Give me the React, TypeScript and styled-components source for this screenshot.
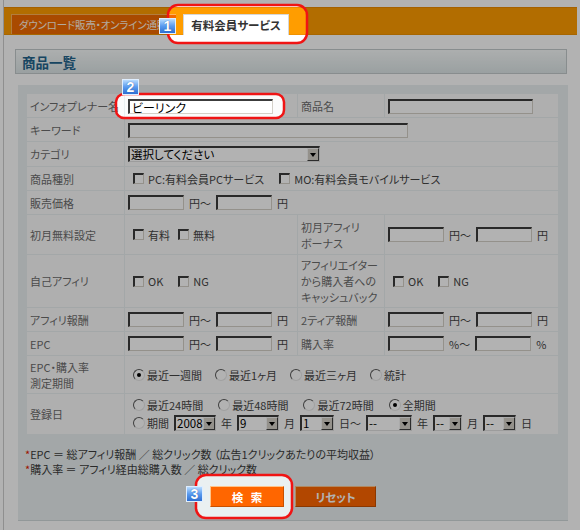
import React from 'react'
import styled, { createGlobalStyle, css } from 'styled-components'

const GlobalStyle = createGlobalStyle`
    html, body {
        margin: 0;
        padding: 0;
        background: #fff;
    }
    body {
        font-family: "Noto Sans CJK JP", "Noto Sans", sans-serif;
        font-size: 11px;
        font-feature-settings: "palt";
        color: #555;
    }
`

const Page = styled.div`
    position: relative;
    width: 580px;
    height: 530px;
    overflow: hidden;
    background: #fff;
`

const Frame = styled.div`
    box-sizing: border-box;
    height: 100%;
    margin-left: 3px;
    padding-top: 7px;
    border-left: 1px solid #cdcdcd;
`

const TabBar = styled.div`
    display: flex;
    box-sizing: border-box;
    width: 573px;
    height: 28px;
    padding-left: 7px;
    gap: 7px;
    align-items: flex-end;
    background: #ff9d00;
    border-top: 1px solid #ec8c00;
    border-bottom: 1px solid #f09200;
`

const Tab = styled.div<{ $active?: boolean }>`
    display: flex;
    box-sizing: border-box;
    height: 20px;
    align-items: center;
    overflow: hidden;
    white-space: nowrap;

    ${p => p.$active ? css`
        width: 106px;
        height: 21px;
        margin-bottom: -1px;
        justify-content: center;
        font-size: 11.5px;
        font-weight: bold;
        color: #333;
        background: #fff;
        border: 1px solid #d6d6d6;
        border-bottom: none;
    ` : css`
        width: 165px;
        padding-left: 7px;
        font-size: 10.5px;
        letter-spacing: -0.2px;
        color: #fff4e4;
        background: #f36a00;
        border-top: 1px solid #ffb45a;
        border-left: 1px solid #ffb45a;
    `}
`

const Content = styled.div`
    padding: 14px 0 0 11px;
`

const PanelHeader = styled.div`
    display: flex;
    box-sizing: border-box;
    width: 552px;
    height: 25px;
    padding-left: 6px;
    align-items: center;
    font-size: 13.5px;
    font-weight: bold;
    color: #23638c;
    background: linear-gradient(#f7fafa, #dde6e7);
    border: 1px solid #c3cbcc;
`

const FormBox = styled.div`
    box-sizing: border-box;
    width: 550px;
    height: 436px;
    margin: 11px 0 0 3px;
    padding: 8px;
    background: #eaf0f1;
    border-bottom: 1px solid #d2dadb;
`

const Grid = styled.table`
    width: 533px;
    table-layout: fixed;
    border-collapse: separate;
    border-spacing: 1px;
`

const Row = styled.tr<{ $h?: number }>`
    height: ${p => p.$h ?? 23}px;
`

const Label = styled.td`
    padding: 2px 3px;
    vertical-align: middle;
    line-height: 16px;
    color: #6c6c6c;
    background: #fbfbfb;
`

const Field = styled.td`
    padding: 2px 3px;
    vertical-align: middle;
    line-height: 16px;
    color: #444;
    background: #fbfbfb;
`

const TextInput = styled.input<{ $w: number }>`
    box-sizing: border-box;
    width: ${p => p.$w}px;
    height: 15px;
    margin: 0;
    padding: 0 2px;
    vertical-align: middle;
    font: inherit;
    font-size: 12px;
    line-height: 12px;
    color: #000;
    background: #fff;
    outline: none;
    border-style: solid;
    border-width: 2px 1px 1px 2px;
    border-color: #3c3c3c #d4d0c8 #d4d0c8 #3c3c3c;
`

const Inline = styled.div<{ $gap: number }>`
    display: flex;
    padding-left: 5px;
    align-items: center;
    gap: ${p => p.$gap}px;
    white-space: nowrap;
`

const Lines = styled.div`
    display: flex;
    flex-direction: column;
    gap: 2px;
`

const Item = styled.span`
    display: inline-flex;
    align-items: center;
    gap: 4px;
`

const Check = styled.span`
    display: inline-block;
    box-sizing: border-box;
    width: 11px;
    height: 11px;
    background: #fff;
    border-style: solid;
    border-width: 2px 1px 1px 2px;
    border-color: #3c3c3c #d4d0c8 #d4d0c8 #3c3c3c;
`

const Radio = styled.span<{ $on?: boolean }>`
    position: relative;
    display: inline-block;
    box-sizing: border-box;
    width: 12px;
    height: 12px;
    margin-right: -2px;
    border-radius: 50%;
    background: #fff;
    border: 1px solid;
    border-color: #5a5a5a #e6e6e6 #e6e6e6 #5a5a5a;

    ${p => p.$on && css`
        &::after {
            content: '';
            position: absolute;
            left: 3px;
            top: 3px;
            width: 4px;
            height: 4px;
            border-radius: 50%;
            background: #000;
        }
    `}
`

const Select = styled.div<{ $w: number }>`
    display: inline-flex;
    box-sizing: border-box;
    width: ${p => p.$w}px;
    height: 16px;
    font-size: 11.5px;
    line-height: 13px;
    color: #000;
    background: #fff;
    border-style: solid;
    border-width: 2px 1px 1px 2px;
    border-color: #3c3c3c #e0e0e0 #e0e0e0 #3c3c3c;
`

const SelectText = styled.span`
    flex: 1;
    min-width: 0;
    padding-left: 1px;
    white-space: nowrap;
`

const SelectArrow = styled.span`
    display: flex;
    flex: none;
    box-sizing: border-box;
    width: 12px;
    align-items: center;
    justify-content: center;
    background: #d4d0c8;
    border: 1px solid;
    border-color: #f4f4f4 #404040 #404040 #f4f4f4;

    &::after {
        content: '';
        border-left: 3.5px solid transparent;
        border-right: 3.5px solid transparent;
        border-top: 4px solid #000;
    }
`

const Notes = styled.div`
    margin: 12px 0 0 -1px;
    font-size: 11px;
    line-height: 15px;
    color: #3c3c3c;
`

const Star = styled.span`
    color: #e02000;
`

const Buttons = styled.div`
    display: flex;
    margin-top: 9px;
    gap: 11px;
    justify-content: center;
`

const Button = styled.div<{ $w: number }>`
    display: flex;
    box-sizing: border-box;
    width: ${p => p.$w}px;
    height: 21px;
    align-items: center;
    justify-content: center;
    font-size: 11.5px;
    font-weight: bold;
    word-spacing: 5px;
    color: #fff;
    background: #ff6600;
    border: 1px solid #ffc48a;
    border-right-color: #c85000;
    border-bottom-color: #c85000;
`

const Overlay = styled.svg`
    position: absolute;
    left: 0;
    top: 0;
    width: 580px;
    height: 530px;
    pointer-events: none;
`

const Badge = styled.div<{ $x: number; $y: number }>`
    position: absolute;
    left: ${p => p.$x}px;
    top: ${p => p.$y}px;
    box-sizing: border-box;
    width: 17px;
    height: 16px;
    font: bold 14px/14px "Liberation Sans", Arial, sans-serif;
    text-align: center;
    color: #fff;
    text-shadow: 0 0 1px #1d4f9a;
    background: linear-gradient(#b8dcff, #5a9bef 50%, #2e6fd2);
    border: 1px solid #dfeeff;
`

const Range: React.FC<{ unit?: string }> = ({ unit = '円' }) => (
    <Inline $gap={5} style={{ paddingLeft: 0 }}>
        <TextInput $w={56} />
        <span>{unit}～</span>
        <TextInput $w={56} />
        <span>{unit}</span>
    </Inline>
)

const Checks: React.FC<{ items: string[]; gap: number }> = ({ items, gap }) => (
    <Inline $gap={gap}>
        {items.map(t => (
            <Item key={t}><Check />{t}</Item>
        ))}
    </Inline>
)

const Radios: React.FC<{ items: string[]; on: number; gap: number }> = ({ items, on, gap }) => (
    <Inline $gap={gap}>
        {items.map((t, i) => (
            <Item key={t}><Radio $on={i === on} />{t}</Item>
        ))}
    </Inline>
)

const DropDown: React.FC<{ w: number; text: string }> = ({ w, text }) => (
    <Select $w={w}>
        <SelectText>{text}</SelectText>
        <SelectArrow />
    </Select>
)

const spots = [
    { x: 168, y: 5, w: 139, h: 38, r: 10 },
    { x: 116, y: 94, w: 168, h: 24, r: 8 },
    { x: 196, y: 475, w: 96, h: 43, r: 10 },
]

export default function App() {
    return (
        <Page>
            <GlobalStyle />
            <Frame>
                <TabBar>
                    <Tab>ダウンロード販売・オンライン通販</Tab>
                    <Tab $active>有料会員サービス</Tab>
                </TabBar>

                <Content>
                    <PanelHeader>商品一覧</PanelHeader>

                    <FormBox>
                        <Grid>
                            <colgroup>
                                <col style={{ width: 97 }} />
                                <col style={{ width: 172 }} />
                                <col style={{ width: 86 }} />
                                <col style={{ width: 173 }} />
                            </colgroup>
                            <tbody>
                                <Row>
                                    <Label>インフォプレナー名</Label>
                                    <Field><TextInput $w={145} defaultValue="ビーリンク" /></Field>
                                    <Label>商品名</Label>
                                    <Field><TextInput $w={145} /></Field>
                                </Row>
                                <Row>
                                    <Label>キーワード</Label>
                                    <Field colSpan={3}><TextInput $w={280} /></Field>
                                </Row>
                                <Row $h={24}>
                                    <Label>カテゴリ</Label>
                                    <Field colSpan={3}><DropDown w={192} text="選択してください" /></Field>
                                </Row>
                                <Row>
                                    <Label>商品種別</Label>
                                    <Field colSpan={3}>
                                        <Checks gap={15} items={['PC:有料会員PCサービス', 'MO:有料会員モバイルサービス']} />
                                    </Field>
                                </Row>
                                <Row>
                                    <Label>販売価格</Label>
                                    <Field colSpan={3}><Range /></Field>
                                </Row>
                                <Row $h={39}>
                                    <Label>初月無料設定</Label>
                                    <Field><Checks gap={8} items={['有料', '無料']} /></Field>
                                    <Label>初月アフィリ<br />ボーナス</Label>
                                    <Field><Range /></Field>
                                </Row>
                                <Row $h={51}>
                                    <Label>自己アフィリ</Label>
                                    <Field><Checks gap={15} items={['OK', 'NG']} /></Field>
                                    <Label>アフィリエイター<br />から購入者への<br />キャッシュバック</Label>
                                    <Field><Checks gap={15} items={['OK', 'NG']} /></Field>
                                </Row>
                                <Row>
                                    <Label>アフィリ報酬</Label>
                                    <Field><Range /></Field>
                                    <Label>2ティア報酬</Label>
                                    <Field><Range /></Field>
                                </Row>
                                <Row>
                                    <Label>EPC</Label>
                                    <Field><Range /></Field>
                                    <Label>購入率</Label>
                                    <Field><Range unit="%" /></Field>
                                </Row>
                                <Row $h={37}>
                                    <Label>EPC・購入率<br />測定期間</Label>
                                    <Field colSpan={3}>
                                        <Radios gap={13} on={0} items={['最近一週間', '最近1ヶ月', '最近三ヶ月', '統計']} />
                                    </Field>
                                </Row>
                                <Row $h={40}>
                                    <Label>登録日</Label>
                                    <Field colSpan={3}>
                                        <Lines>
                                            <Radios gap={15} on={3} items={['最近24時間', '最近48時間', '最近72時間', '全期間']} />
                                            <Inline $gap={5}>
                                                <Item><Radio />期間</Item>
                                                <DropDown w={42} text="2008" />
                                                <span>年</span>
                                                <DropDown w={42} text="9" />
                                                <span>月</span>
                                                <DropDown w={34} text="1" />
                                                <span>日～</span>
                                                <DropDown w={46} text="--" />
                                                <span>年</span>
                                                <DropDown w={29} text="--" />
                                                <span>月</span>
                                                <DropDown w={33} text="--" />
                                                <span>日</span>
                                            </Inline>
                                        </Lines>
                                    </Field>
                                </Row>
                            </tbody>
                        </Grid>

                        <Notes>
                            <div><Star>*</Star>EPC ＝ 総アフィリ報酬 ／ 総クリック数 （広告1クリックあたりの平均収益）</div>
                            <div><Star>*</Star>購入率 ＝ アフィリ経由総購入数 ／ 総クリック数</div>
                        </Notes>

                        <Buttons>
                            <Button $w={74}>検 索</Button>
                            <Button $w={81}>リセット</Button>
                        </Buttons>
                    </FormBox>
                </Content>
            </Frame>

            <Overlay viewBox="0 0 580 530">
                <defs>
                    <mask id="spots">
                        <rect width="580" height="530" fill="#fff" />
                        {spots.map((s, i) => (
                            <rect key={i} x={s.x} y={s.y} width={s.w} height={s.h} rx={s.r} fill="#000" />
                        ))}
                    </mask>
                </defs>
                <rect width="580" height="530" fill="rgba(0,0,0,0.3)" mask="url(#spots)" />
                {spots.map((s, i) => (
                    <rect key={i} x={s.x} y={s.y} width={s.w} height={s.h} rx={s.r} fill="none" stroke="#f01414" strokeWidth="2.5" />
                ))}
            </Overlay>

            <Badge $x={159} $y={18}>1</Badge>
            <Badge $x={122} $y={79}>2</Badge>
            <Badge $x={186} $y={486}>3</Badge>
        </Page>
    )
}
